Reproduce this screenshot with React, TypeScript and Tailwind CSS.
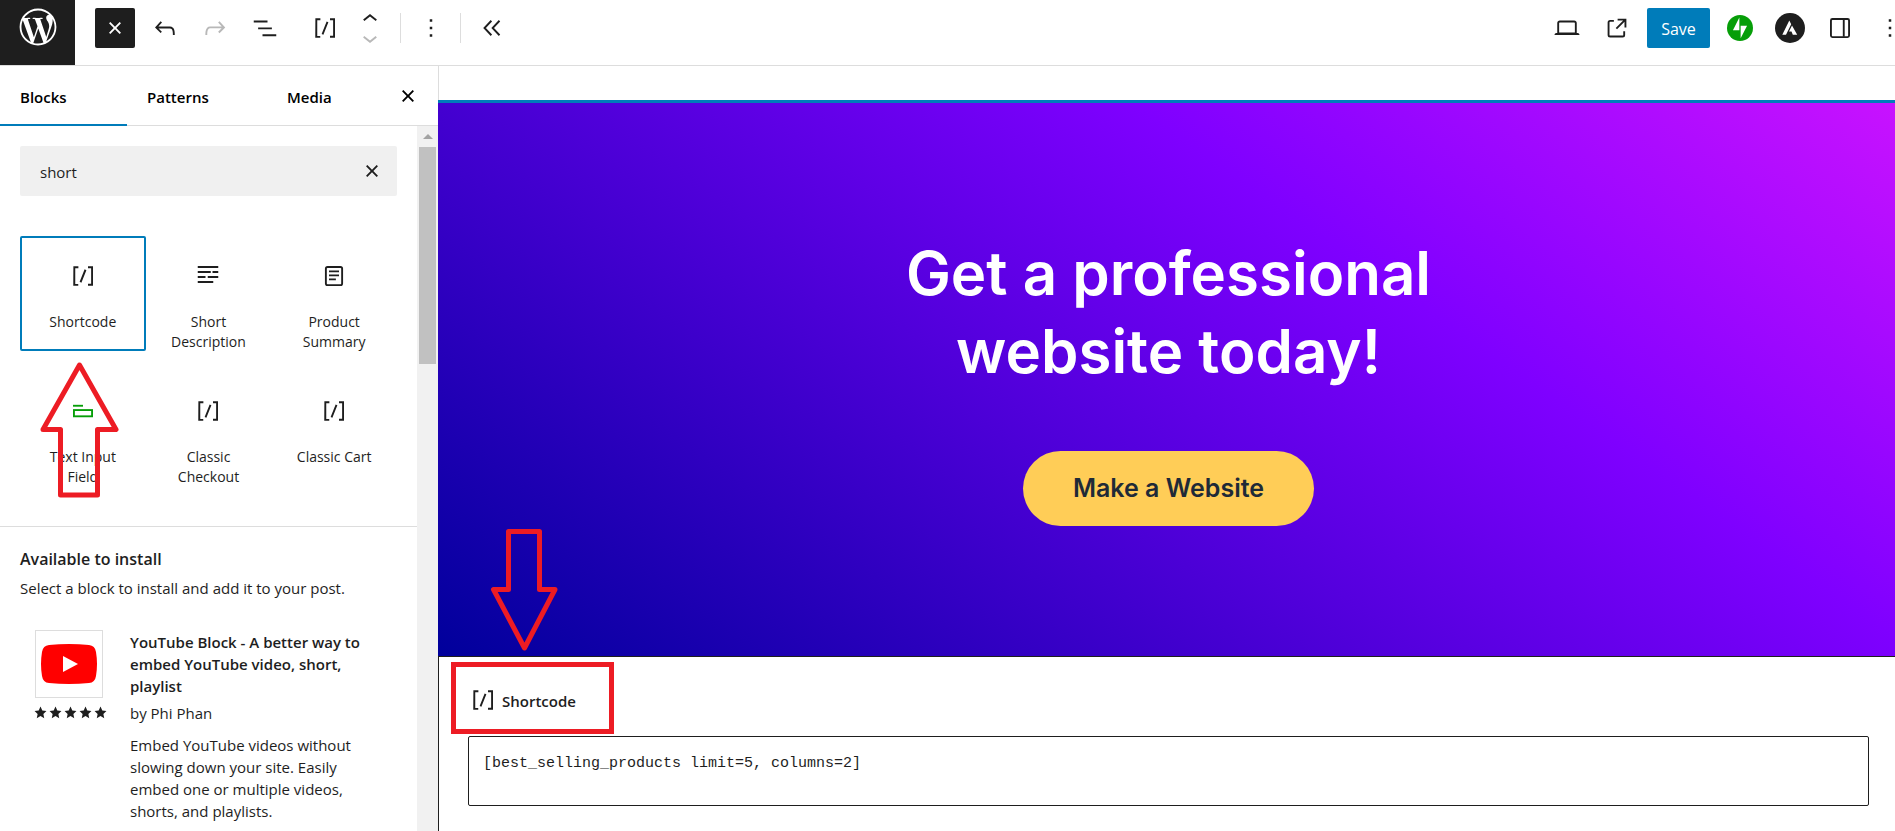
import React, { useState } from 'react';
import { FaWordpressSimple } from 'react-icons/fa';

type IconProps = { className?: string };

const ShortcodeIcon: React.FC<IconProps> = ({ className = 'size-[30px] shrink-0' }) => (
  <svg viewBox="0 0 24 24" className={className} fill="currentColor" aria-hidden="true">
    <path d="M16 4.2v1.5h2.5v12.5H16v1.5h4V4.2h-4zM4.2 19.8h4v-1.5H5.8V5.8h2.5V4.2h-4l-.1 15.6zm5.1-3.1l1.4.6 4-10-1.4-.6-4 10z" />
  </svg>
);

const CloseIcon: React.FC<IconProps> = ({ className = 'size-[30px] shrink-0' }) => (
  <svg viewBox="0 0 24 24" className={className} fill="currentColor" aria-hidden="true">
    <path d="M12 13.06l3.712 3.713 1.061-1.06L13.061 12l3.712-3.712-1.06-1.06L12 10.938 8.288 7.227l-1.061 1.06L10.939 12l-3.712 3.712 1.06 1.061L12 13.061z" />
  </svg>
);

const ExcerptIcon = () => (
  <svg viewBox="0 0 24 24" className="size-[30px] shrink-0" fill="currentColor" aria-hidden="true">
    <path d="M3.8 4h16.4v1.6H3.800zM3.800 8h10.400v1.600H3.800zM15.600 8h4.600v1.600h-4.600zM3.800 12h6.200v1.600H3.800zM11.800 12h8.400v1.600h-8.400zM3.800 16h12.400v1.600H3.800z" />
  </svg>
);

const PageIcon = () => (
  <svg viewBox="0 0 24 24" className="size-[30px] shrink-0" fill="none" stroke="currentColor" strokeWidth="1.5" aria-hidden="true">
    <rect x="5.5" y="4.75" width="13" height="14.5" rx="1.3" />
    <path d="M8 8.3h8M8 11.5h8M8 14.7h5.5" />
  </svg>
);

const TextFieldIcon = () => (
  <svg viewBox="0 0 24 24" className="size-[30px] shrink-0 text-[#069e08]" fill="none" stroke="currentColor" strokeWidth="1.5" aria-hidden="true">
    <path d="M4 7.8h8" />
    <rect x="4.75" y="11.25" width="14.5" height="5" />
  </svg>
);

const MoreIcon = () => (
  <svg viewBox="0 0 24 24" className="size-[30px] shrink-0" fill="currentColor" aria-hidden="true">
    <path d="M13 19h-2v-2h2v2zm0-6h-2v-2h2v2zm0-6h-2V5h2v2z" />
  </svg>
);

const blocks = [
  { name: 'Shortcode', icon: <ShortcodeIcon /> },
  { name: 'Short Description', icon: <ExcerptIcon /> },
  { name: 'Product Summary', icon: <PageIcon /> },
  { name: 'Text Input Field', icon: <TextFieldIcon /> },
  { name: 'Classic Checkout', icon: <ShortcodeIcon /> },
  { name: 'Classic Cart', icon: <ShortcodeIcon /> },
];

const Header = () => (
  <header className="flex h-[66px] shrink-0 border-b border-[#ddd] bg-white">
    <a href="#dashboard" aria-label="View Posts" className="flex w-[75px] justify-center bg-[#1e1e1e] pt-2 text-white">
      <FaWordpressSimple className="size-[38px]" />
    </a>
    <div className="flex h-14 min-w-0 grow items-center justify-between pl-5">
      <div className="flex items-center">
        <button aria-label="Close block inserter" className="flex size-10 items-center justify-center rounded-xs bg-[#1e1e1e] text-white">
          <CloseIcon />
        </button>
        <button aria-label="Undo" className="flex w-[60px] justify-center">
          <svg viewBox="0 0 24 24" className="size-[30px]" fill="currentColor">
            <path d="M18.3 11.7c-.6-.6-1.4-.9-2.3-.9H6.7l2.9-3.3-1.1-1-4.5 5L8.5 16l1-1-2.7-2.7H16c.5 0 .9.2 1.3.5 1 1 1 3.4 1 4.5v.3h1.5v-.2c0-1.5 0-4.3-1.5-5.7z" />
          </svg>
        </button>
        <button aria-label="Redo" className="flex w-10 justify-center text-[#b8b8b8]">
          <svg viewBox="0 0 24 24" className="size-[30px]" fill="currentColor">
            <path d="M15.6 6.5l-1.1 1 2.9 3.3H8c-.9 0-1.7.3-2.3.9-1.4 1.5-1.4 4.2-1.4 5.6v.2h1.5v-.3c0-1.1 0-3.5 1-4.5.3-.3.7-.5 1.3-.5h9.2L14.5 15l1.1 1.1 4.6-4.6-4.6-5z" />
          </svg>
        </button>
        <button aria-label="Document Overview" className="flex w-[60px] justify-center">
          <svg viewBox="0 0 24 24" className="size-[30px]" fill="currentColor">
            <path d="M3 6h11v1.5H3V6Zm3.5 5.5h11V13h-11v-1.5ZM21 17H10v1.5h11V17Z" />
          </svg>
        </button>
        <button aria-label="Shortcode" className="flex w-[60px] justify-center"><ShortcodeIcon /></button>
        <div className="flex w-[30px] flex-col items-center">
          <button aria-label="Move up" className="h-5">
            <svg viewBox="0 0 24 24" className="-my-1 size-[30px]" fill="currentColor">
              <path d="M6.5 12.4L12 8l5.5 4.4-.9 1.2L12 10l-4.5 3.6-1-1.2z" />
            </svg>
          </button>
          <button aria-label="Move down" className="h-5 text-[#b8b8b8]">
            <svg viewBox="0 0 24 24" className="-my-2 size-[30px]" fill="currentColor">
              <path d="M17.5 11.6L12 16l-5.5-4.4.9-1.2L12 14l4.5-3.6 1 1.2z" />
            </svg>
          </button>
        </div>
        <div className="ml-[15px] h-[30px] w-px bg-[#ddd]" />
        <button aria-label="Options" className="flex w-[59px] justify-center"><MoreIcon /></button>
        <div className="h-[30px] w-px bg-[#ddd]" />
        <button aria-label="Hide block tools" className="ml-4 flex">
          <svg viewBox="0 0 24 24" className="size-[30px]" fill="none" stroke="currentColor" strokeWidth="1.5">
            <path d="M11.5 6.2 6 12l5.5 5.8M18 6.2 12.5 12l5.5 5.8" />
          </svg>
        </button>
      </div>
      <div className="flex items-center">
        <button aria-label="View" className="flex w-[50px] justify-center">
          <svg viewBox="0 0 24 24" className="size-[30px]" fill="currentColor">
            <path d="M20.5 16h-.7V8c0-1.1-.9-2-2-2H6.2c-1.1 0-2 .9-2 2v8h-.7c-.8 0-1.5.7-1.5 1.5h20c0-.8-.7-1.5-1.5-1.5zM5.7 8c0-.3.2-.5.5-.5h11.6c.3 0 .5.2.5.5v7.600H5.700V8z" />
          </svg>
        </button>
        <a href="#view" aria-label="View Page" className="flex w-[50px] justify-center">
          <svg viewBox="0 0 24 24" className="size-[30px]" fill="currentColor">
            <path d="M19.5 4.5h-7V6h4.44l-5.97 5.97 1.06 1.06L18 7.06v4.44h1.5v-7Zm-13 1a2 2 0 0 0-2 2v10a2 2 0 0 0 2 2h10a2 2 0 0 0 2-2v-3H17v3a.5.5 0 0 1-.5.5h-10a.5.5 0 0 1-.5-.5v-10a.5.5 0 0 1 .5-.5h3V5.5h-3Z" />
          </svg>
        </a>
        <button className="ml-[5px] h-10 w-[63px] rounded-xs bg-[#007cba] pt-0.5 text-base text-white">Save</button>
        <button aria-label="Jetpack" className="ml-[5px] flex w-[50px] justify-center">
          <svg viewBox="0 0 32 32" className="size-[26px]">
            <circle cx="16" cy="16" r="16" fill="#069e08" />
            <path d="M15.2 18.7H7.3L15.2 3.2zM16.800 28.700V13.300h7.900z" fill="#fff" />
          </svg>
        </button>
        <button aria-label="Astra" className="flex w-[50px] justify-center">
          <svg viewBox="0 0 30 30" className="size-[30px]">
            <circle cx="15" cy="15" r="15" fill="#1e1e1e" />
            <path d="M14.3 7.5 7.3 21.8h3.700l5.200-10.600zM17 12.600l-3 6h2.500l1.300 3.200h4.400z" fill="#fff" />
          </svg>
        </button>
        <button aria-label="Settings" className="flex w-[50px] justify-center">
          <svg viewBox="0 0 24 24" className="size-[30px]" fill="none" stroke="currentColor" strokeWidth="1.5">
            <rect x="4.75" y="4.75" width="14.5" height="14.5" rx="1.2" />
            <path d="M15 5v14" />
          </svg>
        </button>
        <button aria-label="Options" className="flex w-[30px] overflow-hidden pl-2.5"><MoreIcon /></button>
      </div>
    </div>
  </header>
);

const Inserter = () => {
  const [query, setQuery] = useState('short');

  return (
    <aside className="flex w-[438px] shrink-0 flex-col bg-white">
      <div className="flex h-[60px] shrink-0 items-stretch border-b border-[#ddd] text-[15px] font-semibold text-black">
        <button className="-mb-px w-[127px] border-b-2 border-[#007cba] pt-1 pl-5 text-left">Blocks</button>
        <button className="w-[140px] pt-[3px] pl-5 text-left">Patterns</button>
        <button className="grow pt-[3px] pl-5 text-left">Media</button>
        <button aria-label="Close" className="mr-[15px]"><CloseIcon /></button>
      </div>
      <div className="flex min-h-0 grow">
        <div className="min-w-0 grow overflow-hidden">
          <div className="p-5">
            <div className="flex h-[50px] items-center rounded-xs bg-[#f0f0f0] pr-2.5 pl-5">
              <input
                aria-label="Search for blocks and patterns"
                value={query}
                onChange={(e) => setQuery(e.target.value)}
                className="min-w-0 grow bg-transparent pt-0.5 text-[15px] outline-none"
              />
              <button aria-label="Reset search" onClick={() => setQuery('')}><CloseIcon /></button>
            </div>
          </div>
          <div className="grid grid-cols-3 gap-y-5 border-b border-[#ddd] px-5 pt-5 pb-10">
            {blocks.map((block, i) => (
              <button
                key={block.name}
                className={`flex h-[115px] flex-col items-center rounded-xs border-2 px-2 pt-[23px] text-sm leading-5 ${i === 0 ? 'border-[#007cba]' : 'border-transparent'}`}
              >
                {block.icon}
                <span className="mt-[21px] w-24">{block.name}</span>
              </button>
            ))}
          </div>
          <div className="px-5 pt-5">
            <h2 className="text-base leading-6 font-semibold">Available to install</h2>
            <p className="mt-1 text-[15px] leading-[26px]">Select a block to install and add it to your post.</p>
            <div className="mt-[29px] flex pl-[15px]">
              <div className="w-[95px] shrink-0">
                <div className="flex size-[68px] items-center justify-center border border-[#ddd]">
                  <svg viewBox="0 0 56 40" className="w-14">
                    <path d="M8 1Q28-1 48 1 54 1.5 55 8 57 20 55 32 54 38.5 48 39 28 41 8 39 2 38.5 1 32-1 20 1 8 2 1.5 8 1z" fill="#f00" />
                    <path d="M22 12v16l15-8z" fill="#fff" />
                  </svg>
                </div>
                <div className="-ml-0.5 flex pt-2" role="img" aria-label="5 out of 5 stars">
                  {[1, 2, 3, 4, 5].map((n) => (
                    <svg key={n} viewBox="0 0 24 24" className="mx-px size-[13px]" fill="currentColor">
                      <path d="M12 1l3.300 7.300 7.700.900-5.700 5.400 1.600 7.900L12 18.600l-6.900 3.900 1.600-7.900L1 9.200l7.700-.900z" />
                    </svg>
                  ))}
                </div>
              </div>
              <div className="pr-5 text-[15px] leading-[22px]">
                <h3 className="mt-px font-semibold">YouTube Block - A better way to embed YouTube video, short, playlist</h3>
                <p className="mt-[5px]">by Phi Phan</p>
                <p className="mt-2.5">Embed YouTube videos without slowing down your site. Easily embed one or multiple videos, shorts, and playlists.</p>
              </div>
            </div>
          </div>
        </div>
        <div className="flex w-[21px] shrink-0 flex-col items-center bg-[#f1f1f1]">
          <div className="flex h-[21px] items-center">
            <svg viewBox="0 0 10 5" className="w-2.5" fill="#a3a3a3"><path d="M5 0l5 5H0z" /></svg>
          </div>
          <div className="h-[217px] w-[17px] bg-[#c1c1c1]" />
        </div>
      </div>
    </aside>
  );
};

const Canvas = () => (
  <main className="flex min-w-0 grow flex-col">
    <div className="h-[34px] shrink-0 border-l border-[#ddd]" />
    <section className="flex h-[556px] shrink-0 flex-col items-center border-t-[3px] border-[#007cba] bg-linear-[35deg,#00009b,#7f00ff_66%,#c812ff] pt-[131px] pl-1">
      <h1 className="w-[600px] text-center font-[Inter] text-[60px] leading-[78px] font-semibold text-white">Get a professional website today!</h1>
      <button className="mt-[61px] h-[75px] w-[291px] rounded-full bg-[#ffcd57] font-[Inter] text-[25px] font-semibold text-[#1f2a37]">Make a Website</button>
    </section>
    <section className="grow border-t border-l border-[#1e1e1e] pt-[5px] pl-3">
      <label htmlFor="shortcode" className="flex h-[72px] w-[163px] items-center border-[5px] border-[#ed1c24] pt-1 pl-3 text-[15px] font-semibold">
        <ShortcodeIcon />
        <span className="pt-0.5 pl-1">Shortcode</span>
      </label>
      <div className="mt-0.5 pr-[26px] pl-[17px]">
        <textarea
          id="shortcode"
          defaultValue="[best_selling_products limit=5, columns=2]"
          className="block h-[70px] w-full resize-none rounded-xs border border-[#1e1e1e] px-3.5 py-4 font-['Liberation_Mono',monospace] text-[15px] leading-[22px]"
        />
      </div>
    </section>
  </main>
);

// hand-drawn arrows lying over the editor
const Annotations = () => (
  <div className="pointer-events-none">
    <svg viewBox="0 0 80 138" className="absolute top-[361px] left-[39px] w-20" fill="none" stroke="#ed1c24" strokeWidth="5" strokeLinejoin="round">
      <path d="M40.5 4 L77 68.5 H58.5 V134 H21.5 V68.5 H4 Z" />
    </svg>
    <svg viewBox="0 0 68 124" className="absolute top-[528px] left-[490px] w-[68px]" fill="none" stroke="#ed1c24" strokeWidth="5" strokeLinejoin="round">
      <path d="M18.5 3.5 H49.5 V61.5 H65 L34.5 120 L3.5 61.5 H18.5 Z" />
    </svg>
  </div>
);

const App: React.FC = () => (
  <div className="relative flex h-screen flex-col overflow-hidden bg-white font-['Open_Sans',sans-serif] text-[#1e1e1e]">
    <Header />
    <div className="flex min-h-0 grow">
      <Inserter />
      <Canvas />
    </div>
    <Annotations />
  </div>
);

export default App;
